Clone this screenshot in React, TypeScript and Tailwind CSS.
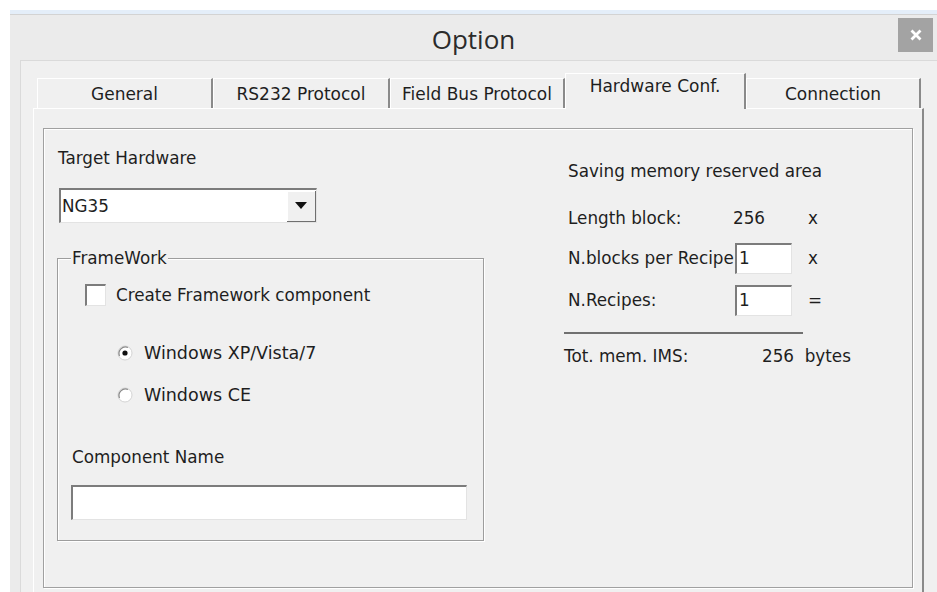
import React from 'react';

const ui = { fontFamily: '"DejaVu Sans", "Liberation Sans", sans-serif' };

type TabProps = { label: string; width: string; active?: boolean };

const Tab = ({ label, width, active }: TabProps) => (
  <div
    className={`${width} flex items-center justify-center border-l border-t border-white border-r-2 border-r-[#8a8a8a] text-[17px] text-[#1e1e1e] ${
      active ? 'h-[36px] -mb-[1px] bg-[#f0f0f0] pb-[10px] relative z-10' : 'h-[30px] bg-[#f0f0f0] pt-[2px]'
    }`}
  >
    {label}
  </div>
);

// sunken white box, classic win32 look
const Sunken = ({ className, children }: { className: string; children?: React.ReactNode }) => (
  <div
    className={`${className} bg-white border-t-2 border-l-2 border-t-[#7c7c7c] border-l-[#7c7c7c] border-b border-r border-b-[#e3e3e3] border-r-[#e3e3e3]`}
  >
    {children}
  </div>
);

const Radio = ({ checked }: { checked?: boolean }) => (
  <svg width="16" height="16" viewBox="0 0 16 16" className="shrink-0">
    <circle cx="8" cy="8" r="7" fill="#fff" stroke="#d4d4d4" strokeWidth="1" />
    <path d="M2.5 11 A6.5 6.5 0 0 1 11 2.5" fill="none" stroke="#8c8c8c" strokeWidth="1.3" />
    {checked && <circle cx="8" cy="8" r="2.6" fill="#111" />}
  </svg>
);

const App = () => {
  return (
    <div className="w-[937px] h-[592px] bg-white pt-[10px] pl-[10px] overflow-hidden" style={ui}>
      <div className="w-[927px] h-[582px] bg-[#ebebeb] border-t-4 border-t-[#e4eef9]">
        {/* title bar */}
        <div className="relative h-[46px] border-t border-t-[#d3d3d3]">
          <div
            className="text-center pt-[5px] text-[26px] text-[#2b2b2b]"
            style={{ fontFamily: '"Open Sans", "Noto Sans", sans-serif' }}
          >
            Option
          </div>
          <div className="absolute right-[4px] top-[3px] w-[35px] h-[34px] bg-[#a3a3a3] flex items-center justify-center">
            <svg width="12" height="12" viewBox="0 0 12 12">
              <path d="M1.5 1.5 L10.5 10.5 M10.5 1.5 L1.5 10.5" stroke="#fff" strokeWidth="2.8" />
            </svg>
          </div>
        </div>

        {/* client area */}
        <div className="ml-[10px] h-[536px] bg-[#f0f0f0] border-t border-l border-[#dadada] pt-[11px] pl-[12px]">
          <div className="flex items-end ml-[4px] h-[36px]">
            <Tab label="General" width="w-[176px]" />
            <Tab label="RS232 Protocol" width="w-[177px]" />
            <Tab label="Field Bus Protocol" width="w-[175px]" />
            <Tab label="Hardware Conf." width="w-[181px]" active />
            <Tab label="Connection" width="w-[175px]" />
          </div>

          {/* tab page */}
          <div className="w-[891px] h-[490px] border-t border-l border-white border-r-2 border-r-[#8a8a8a] pt-[19px] pl-[9px]">
            <div className="w-[870px] h-[460px] border border-[#a0a0a0] shadow-[inset_1px_1px_0_#fff,1px_1px_0_#fff] flex text-[16.8px] text-[#1e1e1e]">
              {/* left column */}
              <div className="w-[427px] ml-[13px] pt-[19px] flex flex-col">
                <div className="ml-[1px] leading-[20px]">Target Hardware</div>
                <Sunken className="mt-[20px] ml-[2px] w-[258px] h-[35px] flex items-center">
                  <span className="flex-1 pl-[1px] leading-[20px]">NG35</span>
                  <div className="w-[29px] h-[31px] bg-[#f0f0f0] border-r border-b border-[#6f6f6f] shadow-[inset_1px_1px_0_#fff] flex items-center justify-center">
                    <svg width="12" height="7" viewBox="0 0 12 7">
                      <path d="M0 0 H12 L6 7 Z" fill="#111" />
                    </svg>
                  </div>
                </Sunken>

                {/* FrameWork group */}
                <div className="relative mt-[35px] w-[427px] h-[283px] border border-[#9d9d9d] shadow-[inset_1px_1px_0_#fff,1px_1px_0_#fff]">
                  <span className="absolute -top-[11px] left-[13px] px-[1px] bg-[#f0f0f0] leading-[20px]">FrameWork</span>
                  <div className="pl-[27px] pt-[25px] flex items-center gap-[10px]">
                    <Sunken className="w-[21px] h-[22px]" />
                    <span className="leading-[20px]">Create Framework component</span>
                  </div>
                  <div className="pl-[59px] mt-[37px] flex items-center gap-[11px] text-[17.5px]">
                    <Radio checked />
                    <span className="leading-[20px]">Windows XP/Vista/7</span>
                  </div>
                  <div className="pl-[59px] mt-[22px] flex items-center gap-[11px] text-[17.5px]">
                    <Radio />
                    <span className="leading-[20px]">Windows CE</span>
                  </div>
                  <div className="pl-[14px] mt-[42px] leading-[20px]">Component Name</div>
                  <Sunken className="ml-[13px] mt-[18px] w-[396px] h-[35px]" />
                </div>
              </div>

              {/* right column */}
              <div className="ml-[80px] pt-[32px] flex flex-col">
                <div className="ml-[4px] leading-[20px]">Saving memory reserved area</div>
                <div className="ml-[4px] mt-[28px] flex items-center h-[20px]">
                  <span className="w-[165px]">Length block:</span>
                  <span className="w-[75px]">256</span>
                  <span>x</span>
                </div>
                <div className="ml-[4px] mt-[14px] flex items-center h-[31px]">
                  <span className="w-[167px] whitespace-nowrap">N.blocks per Recipe</span>
                  <Sunken className="w-[57px] h-[31px] pl-[2px] leading-[26px]">1</Sunken>
                  <span className="ml-[16px]">x</span>
                </div>
                <div className="ml-[4px] mt-[11px] flex items-center h-[31px]">
                  <span className="w-[167px]">N.Recipes:</span>
                  <Sunken className="w-[57px] h-[31px] pl-[2px] leading-[26px]">1</Sunken>
                  <span className="ml-[16px]">=</span>
                </div>
                <div className="mt-[16px] w-[239px] h-[2px] bg-[#707070]" />
                <div className="mt-[13px] flex items-center h-[20px]">
                  <span className="w-[198px]">Tot. mem. IMS:</span>
                  <span>256&nbsp;&nbsp;bytes</span>
                </div>
              </div>
            </div>
          </div>
        </div>
      </div>
    </div>
  );
};

export default App;
